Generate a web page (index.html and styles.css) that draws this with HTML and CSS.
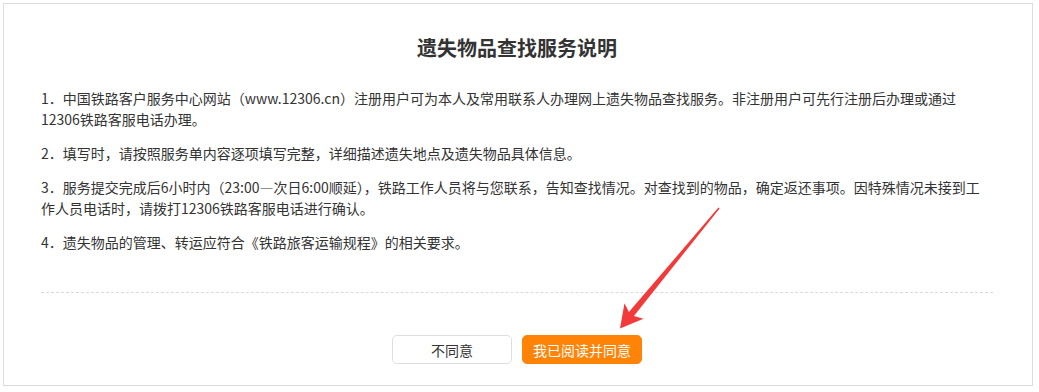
FILE: index.html
```html
<!DOCTYPE html>
<html lang="zh-CN">
<head>
    <meta charset="UTF-8">
    <title>遗失物品查找服务说明</title>
    <link rel="stylesheet" href="styles.css">
</head>
<body>
    <div class="dialog">
        <h1>遗失物品查找服务说明</h1>
        <div class="content">
            <p>1．中国铁路客户服务中心网站（www.12306.cn）注册用户可为本人及常用联系人办理网上遗失物品查找服务。非注册用户可先行注册后办理或通过12306铁路客服电话办理。</p>
            <p>2．填写时，请按照服务单内容逐项填写完整，详细描述遗失地点及遗失物品具体信息。</p>
            <p>3．服务提交完成后6小时内（23:00—次日6:00顺延），铁路工作人员将与您联系，告知查找情况。对查找到的物品，确定返还事项。因特殊情况未接到工作人员电话时，请拨打12306铁路客服电话进行确认。</p>
            <p>4．遗失物品的管理、转运应符合《铁路旅客运输规程》的相关要求。</p>
        </div>
        <div class="actions">
            <button class="btn btn-cancel">不同意</button>
            <button class="btn btn-ok">我已阅读并同意</button>
        </div>
    </div>

    <!-- annotation arrow drawn over the dialog -->
    <svg class="arrow" width="1039" height="392" viewBox="0 0 1039 392">
        <polygon fill="#f23a3a" points="719.6,208.4 633.9,316.1 643.5,318.8 620,328.5 624.5,303.2 628.9,312.1 718.4,207.6"/>
    </svg>
</body>
</html>
```

FILE: styles.css
```css
body {
    margin: 0;
    background: #fff;
    font-family: "Microsoft YaHei", "Noto Sans CJK SC", sans-serif;
    color: #333;
    position: relative;
}
.dialog {
    box-sizing: border-box;
    width: 1030px;
    height: 383px;
    margin: 3px 0 0 3px;
    border: 1px solid #dcdcdc;
    padding: 29px 39px 0 37px;
}
h1 {
    margin: 0;
    font-size: 20px;
    line-height: 30px;
    font-weight: bold;
    text-align: center;
    color: #333;
}
.content {
    margin-top: 25px;
    padding-bottom: 39px;
    border-bottom: 1px dashed #dadada;
}
.content p {
    margin: 0 0 13px;
    font-size: 14px;
    line-height: 21px;
}
.content p:last-child {
    margin-bottom: 0;
}
.actions {
    display: flex;
    justify-content: center;
    gap: 10px;
    margin-top: 42px;
}
.btn {
    box-sizing: border-box;
    width: 120px;
    height: 29px;
    border-radius: 5px;
    font-family: inherit;
    font-size: 14px;
    padding: 0;
    cursor: pointer;
}
.btn-cancel {
    background: #fff;
    border: 1px solid #dedede;
    color: #333;
}
.btn-ok {
    background: #ff8306;
    border: 1px solid #ff8306;
    color: #fff;
}
.arrow {
    position: absolute;
    left: 0;
    top: 0;
    pointer-events: none;
}
```
